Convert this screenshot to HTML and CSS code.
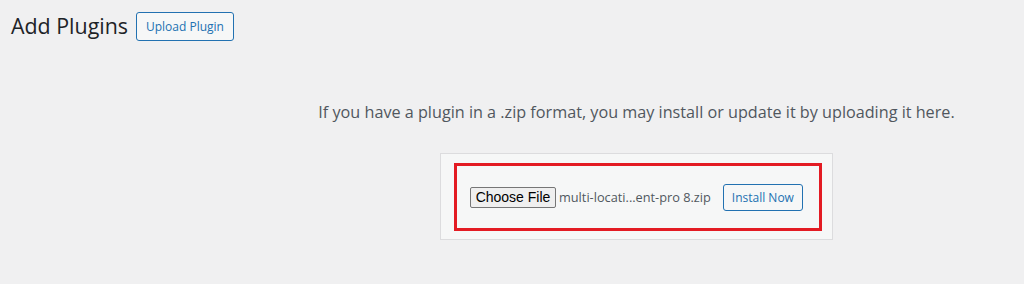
FILE: index.html
```html
<!DOCTYPE html>
<html lang="en">
<head>
    <meta charset="UTF-8">
    <meta name="viewport" content="width=device-width, initial-scale=1.0">
    <title>Add Plugins</title>
    <link rel="stylesheet" href="styles.css">
</head>
<body>
    <div class="wrap">
        <div class="page-head">
            <h1>Add Plugins</h1>
            <button class="btn">Upload Plugin</button>
        </div>

        <div class="upload-plugin">
            <p class="install-help">If you have a plugin in a .zip format, you may install or update it by uploading it here.</p>
            <form class="upload-form">
                <div class="highlight">
                    <button type="button" class="file-btn">Choose File</button>
                    <span class="file-name">multi-locati...ent-pro 8.zip</span>
                    <button type="submit" class="btn install-btn">Install Now</button>
                </div>
            </form>
        </div>
    </div>
</body>
</html>
```

FILE: styles.css
```css
/* General Reset */
* {
    margin: 0;
    padding: 0;
    box-sizing: border-box;
}

body {
    font-family: 'Open Sans', 'Noto Sans', sans-serif;
    background: #f0f0f1;
    color: #3c434a;
    height: 284px;
    overflow: hidden;
}

.wrap {
    padding: 10px 0 0 11px;
}

/* Heading */
.page-head {
    display: flex;
    align-items: center;
    gap: 8px;
}

.page-head h1 {
    font-size: 21.4px;
    font-weight: 400;
    color: #1d2327;
    line-height: 32px;
}

.btn {
    background: #f6f7f7;
    color: #2271b1;
    border: 1px solid #2271b1;
    border-radius: 3px;
    font-family: inherit;
    font-size: 12px;
    padding: 0 9px;
    height: 29px;
    cursor: pointer;
}

/* Upload area */
.upload-plugin {
    display: flex;
    flex-direction: column;
    align-items: center;
    padding-left: 238px;
    margin-top: 59px;
}

.install-help {
    font-size: 16.2px;
    color: #50575e;
    line-height: 22px;
}

.upload-form {
    margin-top: 30px;
    width: 393px;
    height: 87px;
    background: #f6f7f7;
    border: 1px solid #dcdcde;
    padding: 9px 10px 0 13px;
}

.highlight {
    display: flex;
    align-items: center;
    height: 68px;
    border: 3px solid #e31b23;
    padding: 0 0 0 13px;
}

.file-btn {
    font-family: 'Liberation Sans', Arial, sans-serif;
    font-size: 14px;
    color: #000;
    background: #efefef;
    border: 1px solid #767676;
    border-radius: 2px;
    height: 21px;
    width: 86px;
}

.file-name {
    font-size: 12.75px;
    color: #50575e;
    margin-left: 3px;
}

.install-btn {
    margin-left: 12px;
    height: 27px;
    width: 80px;
    padding: 0;
}
```
